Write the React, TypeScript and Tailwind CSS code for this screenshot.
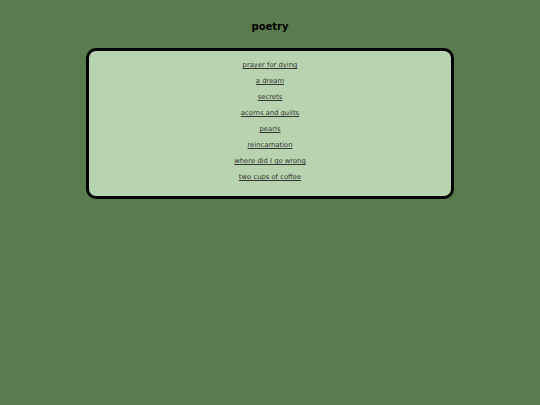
const poems = [
  "prayer for dying",
  "a dream",
  "secrets",
  "acorns and quilts",
  "pearls",
  "reincarnation",
  "where did I go wrong",
  "two cups of coffee",
];

export default function App() {
  return (
    <div
      className="min-h-[405px] w-full bg-[#5a7b4d] pt-[19px]"
      style={{ fontFamily: '"DejaVu Sans", Verdana, sans-serif' }}
    >
      <h1 className="text-center text-[10px] font-bold leading-[16px] text-black">poetry</h1>
      <div className="mx-auto mt-[13px] w-[368px] rounded-[10px] border-[3px] border-black bg-[#b8d3b0] pt-[6px] pb-[11px]">
        {poems.map((p) => (
          <div key={p} className="text-center text-[6.8px] leading-[16px]">
            <a href="#" className="text-[#333] underline">
              {p}
            </a>
          </div>
        ))}
      </div>
    </div>
  );
}
